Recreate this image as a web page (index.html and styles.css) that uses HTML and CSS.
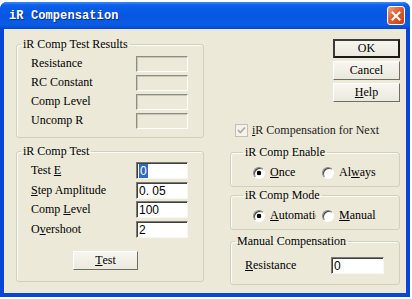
FILE: index.html
```html
<!DOCTYPE html>
<html>
  <head>
    <meta charset="utf-8">
    <title>iR Compensation</title>
    <link rel="stylesheet" href="styles.css">
  </head>
  <body>
    <div class="window">
      <div class="titlebar">
        <span class="title">iR Compensation</span>
        <span class="close" aria-label="Close">
          <svg width="10" height="10" viewBox="0 0 10 10"><path d="M1.5 1.5 L8.5 8.5 M8.5 1.5 L1.5 8.5" stroke="#fff" stroke-width="2" stroke-linecap="square"/></svg>
        </span>
      </div>
      <div class="client">
        <div class="left">
          <fieldset class="group results">
            <legend>iR Comp Test Results</legend>
            <div class="row"><span>Resistance</span><span class="box"></span></div>
            <div class="row"><span>RC Constant</span><span class="box"></span></div>
            <div class="row"><span>Comp Level</span><span class="box"></span></div>
            <div class="row"><span>Uncomp R</span><span class="box"></span></div>
          </fieldset>
          <fieldset class="group test">
            <legend>iR Comp Test</legend>
            <div class="row tall"><span>Test <u>E</u></span><span class="box edit"><span class="sel">0</span></span></div>
            <div class="row tall"><span><u>S</u>tep Amplitude</span><span class="box edit">0. 05</span></div>
            <div class="row tall"><span>Comp <u>L</u>evel</span><span class="box edit">100</span></div>
            <div class="row tall"><span>O<u>v</u>ershoot</span><span class="box edit">2</span></div>
            <div class="test-row"><span class="btn test-btn"><u>T</u>est</span></div>
          </fieldset>
        </div>
        <div class="right">
          <div class="actions">
            <span class="btn default">OK</span>
            <span class="btn">Cancel</span>
            <span class="btn"><u>H</u>elp</span>
          </div>
          <div class="check">
            <svg width="13" height="13" viewBox="0 0 13 13">
              <rect x="0.5" y="0.5" width="12" height="12" fill="#f3f2ec" stroke="#c2c0b2"/>
              <path d="M3 6 L5.3 8.5 L10 3.5" fill="none" stroke="#aeac9e" stroke-width="1.8"/>
            </svg>
            <span><u>i</u>R Compensation for Next</span>
          </div>
          <fieldset class="group choice enable">
            <legend>iR Comp Enable</legend>
            <div class="radios">
              <span class="radio"><span class="dot on"></span><span><u>O</u>nce</span></span>
              <span class="radio"><span class="dot"></span><span>Al<u>w</u>ays</span></span>
            </div>
          </fieldset>
          <fieldset class="group choice mode">
            <legend>iR Comp Mode</legend>
            <div class="radios">
              <span class="radio"><span class="dot on"></span><span class="clip"><u>A</u>utomatic</span></span>
              <span class="radio"><span class="dot"></span><span><u>M</u>anual</span></span>
            </div>
          </fieldset>
          <fieldset class="group manual">
            <legend>Manual Compensation</legend>
            <div class="row"><span><u>R</u>esistance</span><span class="box edit wide">0</span></div>
          </fieldset>
        </div>
      </div>
    </div>
  </body>
</html>
```

FILE: styles.css
```css
body {
    margin: 0;
    background: #fff;
    font: 12px "Liberation Serif", serif;
    color: #000;
}
.window {
    width: 410px;
    height: 295px;
    margin-top: 2px;
    box-sizing: border-box;
    padding: 0 4px 4px;
    display: flex;
    flex-direction: column;
    background: #0846d8;
    border-radius: 7px 7px 0 0;
}
.titlebar {
    height: 27px;
    margin: 0 -4px;
    padding: 0 5px 0 9px;
    display: flex;
    align-items: center;
    border-radius: 7px 7px 0 0;
    background: linear-gradient(#3d8cf7, #0a5ee9 12%, #0756e2 50%, #0a5ce6 85%, #0644cc);
}
.title {
    flex: 1;
    color: #fff;
    font: bold 12px "Liberation Mono", monospace;
    letter-spacing: 0.1px;
    text-shadow: 1px 1px #0a2d8a;
}
.close {
    width: 18px;
    height: 19px;
    box-sizing: border-box;
    display: flex;
    align-items: center;
    justify-content: center;
    border: 1px solid #fff;
    border-radius: 3px;
    background: linear-gradient(135deg, #f0a27f, #dd5f32 45%, #c2401b);
}
.client {
    flex: 1;
    display: flex;
    padding-left: 12px;
    background: #ece9d8;
}
.left {
    width: 188px;
}
.right {
    width: 170px;
    margin-left: 26px;
    display: flex;
    flex-direction: column;
}
.group {
    margin: 0;
    padding: 0 15px 0 14px;
    min-width: 0;
    border: 1px solid #d0d0bf;
    border-radius: 3px;
    box-shadow: inset 1px 1px #fbfbf8;
}
.group legend {
    margin-left: -10px;
    padding: 0 2px;
    line-height: 14px;
}
.results {
    margin-top: 8px;
    padding-top: 3px;
    padding-bottom: 7px;
}
.test {
    margin-top: 6px;
    padding-top: 3px;
    padding-bottom: 11px;
}
.row {
    height: 19px;
    display: flex;
    align-items: center;
    justify-content: space-between;
}
.row.tall {
    height: 19.5px;
}
.box {
    width: 52px;
    height: 16px;
    box-sizing: border-box;
    border: 1px solid;
    border-color: #8d8c80 #fdfdfb #fdfdfb #8d8c80;
    box-shadow: inset 1px 1px #c9c7b9;
}
.box.edit {
    height: 17px;
    padding: 1px 0 0 2px;
    background: #fff;
    border-color: #7a7a70 #f7f7f3 #f7f7f3 #7a7a70;
    box-shadow: inset 1px 1px #404040;
    font: 12px "Liberation Sans", sans-serif;
    line-height: 14px;
}
.box.wide {
    width: 53px;
}
.sel {
    padding: 0 1px;
    background: #316ac5;
    color: #fff;
}
.test-row {
    margin-top: 12px;
    padding-left: 42px;
}
.btn {
    width: 67px;
    height: 19px;
    box-sizing: border-box;
    display: flex;
    align-items: center;
    justify-content: center;
    border: 1px solid;
    border-color: #fff #6f6e66 #6f6e66 #fff;
    background: linear-gradient(#f7f6ef, #ebe9dd);
}
.btn.default {
    border: 2px solid;
    border-color: #3a3a36 #1a1a18 #1a1a18 #3a3a36;
}
.test-btn {
    width: 65px;
}
.actions {
    margin-top: 10px;
    display: flex;
    flex-direction: column;
    align-items: flex-end;
    gap: 3px;
    padding-right: 0;
}
.check {
    margin-top: 22px;
    padding-left: 5px;
    height: 13px;
    display: flex;
    align-items: center;
    gap: 4px;
}
.check span {
    color: #1a1a1a;
}
.enable {
    margin-top: 8px;
    padding-top: 6px;
    padding-bottom: 8px;
}
.mode {
    margin-top: 1px;
    padding-top: 6px;
    padding-bottom: 8px;
}
.manual {
    margin-top: 4px;
    padding-top: 8px;
    padding-bottom: 9px;
}
.choice {
    padding-left: 22px;
}
.radios {
    height: 13px;
    display: grid;
    grid-template-columns: 69px auto;
    align-items: center;
}
.radio {
    display: flex;
    align-items: center;
    gap: 5px;
}
.dot {
    width: 12px;
    height: 12px;
    box-sizing: border-box;
    border: 1px solid;
    border-color: #8a897e #fff #fff #8a897e;
    border-radius: 50%;
    background: #fff;
    box-shadow: inset 1px 1px #404040;
}
.dot.on {
    background: radial-gradient(circle, #000 2px, #fff 2.6px);
}
.clip {
    width: 46px;
    overflow: hidden;
    white-space: nowrap;
}
```
